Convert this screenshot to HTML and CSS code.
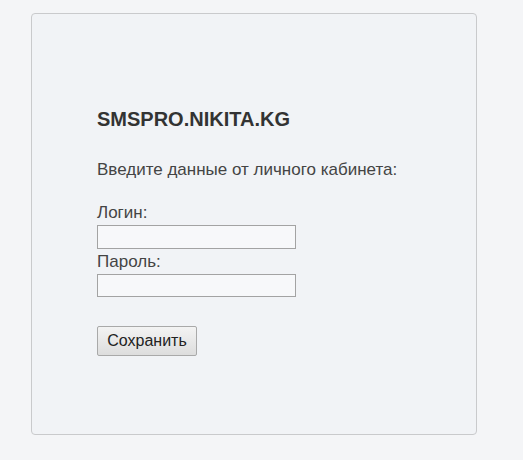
FILE: index.html
```html
<!DOCTYPE html>
<html lang="ru">
<head>
<meta charset="utf-8">
<link rel="stylesheet" href="styles.css">
</head>
<body>
<div class="card">
  <h1 class="title">SMSPRO.NIKITA.KG</h1>
  <p class="intro">Введите данные от личного кабинета:</p>
  <form class="form">
    <label class="label" for="login">Логин:</label>
    <input class="field" id="login" type="text">
    <label class="label" for="pass">Пароль:</label>
    <input class="field" id="pass" type="password">
    <button class="btn" type="button">Сохранить</button>
  </form>
</div>
</body>
</html>
```
FILE: styles.css
```css
html, body {
  margin: 0;
  padding: 0;
}
body {
  background: #f4f5f7;
  font-family: "Liberation Sans", Arial, sans-serif;
  color: #444;
  width: 523px;
  height: 460px;
  overflow: hidden;
}
.card {
  box-sizing: border-box;
  margin: 13px 0 0 31px;
  width: 446px;
  height: 422px;
  border: 1px solid #c9cacc;
  border-radius: 4px;
  background: #f1f3f6;
  padding: 94px 0 0 65px;
}
.title {
  margin: 0;
  font-size: 20px;
  line-height: 23px;
  font-weight: bold;
  color: #333;
}
.intro {
  margin: 29px 0 0;
  font-size: 17px;
  line-height: 20px;
}
.form {
  display: flex;
  flex-direction: column;
  align-items: flex-start;
  margin-top: 20px;
}
.label {
  font-size: 17px;
  line-height: 20px;
  margin: 3px 0 2px;
}
.field {
  box-sizing: border-box;
  width: 199px;
  height: 23.5px;
  margin: 0;
  border: 1px solid #a3a3a3;
  background: #f7f8fa;
  padding: 1px 3px;
  font: 14px "Liberation Sans", Arial, sans-serif;
}
.btn {
  box-sizing: border-box;
  margin-top: 29px;
  width: 100px;
  height: 30px;
  border: 1px solid #a9a9a9;
  border-radius: 2px;
  background: linear-gradient(#f3f3f3, #dddddd);
  font: 16px "Liberation Sans", Arial, sans-serif;
  color: #222;
  padding: 0;
}
```
